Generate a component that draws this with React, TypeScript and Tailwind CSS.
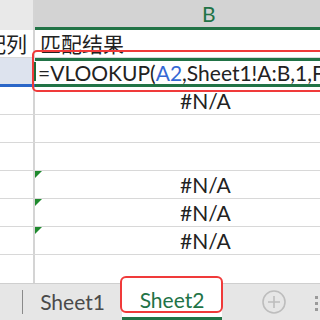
import React from "react";

const font = { fontFamily: 'Lato, "Noto Sans CJK SC", sans-serif' };

function Tri() {
  return <span className="absolute left-0 top-0 w-0 h-0 border-t-[7px] border-r-[7px] border-t-[#1f8a2e] border-r-transparent" />;
}

function Row({ b, tri }: { b?: React.ReactNode; tri?: boolean }) {
  return (
    <div className="flex h-[28px] border-b border-[#d8d8d8]">
      <div className="w-[35px] shrink-0 border-r-2 border-[#d4d4d4]" />
      <div className="relative flex-1 flex items-center pl-[145px] text-[21px] text-[#222]">
        {tri && <Tri />}
        {b}
      </div>
    </div>
  );
}

export default function App() {
  return (
    <div className="w-[320px] h-[320px] overflow-hidden bg-white relative" style={font}>
      {/* column headers */}
      <div className="flex h-[30px]">
        <div className="w-[35px] bg-[#e9e9e9] border-r-2 border-[#d4d4d4]" />
        <div className="flex-1 bg-[#d3d3d3] border-b-[3px] border-[#217346] flex items-center pl-[167px] text-[21px] text-[#217346]">
          B
        </div>
      </div>

      {/* row 1 */}
      <div className="flex h-[28px] border-b border-[#d8d8d8] text-[21px] text-[#222] items-center">
        <div className="w-[35px] shrink-0 h-full border-r-2 border-[#d4d4d4] overflow-hidden flex items-center justify-end pr-[6px] whitespace-nowrap">
          配列
        </div>
        <div className="flex-1 pl-[5px] whitespace-nowrap">匹配结果</div>
      </div>

      {/* row 2 (selected) */}
      <div className="flex h-[29px]">
        <div className="w-[35px] shrink-0 bg-[#dde3ee] border-b-[3px] border-[#2a66c8] relative">
          <span className="absolute right-[-1px] top-[4px] w-[3px] h-[19px] bg-[#1e6b3a]" />
        </div>
        <div className="flex-1 border-y-[3px] border-[#217346] flex items-center pl-[3px] text-[21px] text-[#222] whitespace-nowrap overflow-hidden">
          =VLOOKUP(<span className="text-[#3568d4]">A2</span>,Sheet1!A:B,1,FALSE)
        </div>
      </div>

      <Row b="#N/A" />
      <Row />
      <Row />
      <Row b="#N/A" tri />
      <Row b="#N/A" tri />
      <Row b="#N/A" tri />
      <div className="flex h-[28px]">
        <div className="w-[35px] shrink-0 border-r-2 border-[#d4d4d4]" />
        <div className="flex-1" />
      </div>

      {/* sheet tabs */}
      <div className="flex h-[37px] bg-[#e6e6e6] border-t border-[#cfcfcf] items-stretch">
        <div className="w-[23px] flex items-center justify-end">
          <span className="w-px h-[24px] bg-[#8a8a8a]" />
        </div>
        <div className="w-[99px] flex items-center justify-center text-[21px] text-[#4a4a4a]">Sheet1</div>
        <div className="w-[100px] bg-white flex items-center justify-center text-[21px] text-[#217346] border-b-[3px] border-[#217346] -mt-px">
          Sheet2
        </div>
        <div className="flex-1 flex items-center justify-end pr-[34px]">
          <svg width="24" height="24" viewBox="0 0 24 24" fill="none" stroke="#bdbdbd" strokeWidth="1.6">
            <circle cx="12" cy="12" r="11" />
            <path d="M12 6v12M6 12h12" />
          </svg>
        </div>
      </div>
      <div className="absolute right-[2px] top-[296px] flex flex-col gap-[3px]">
        <span className="w-[3px] h-[3px] bg-[#9a9a9a]" />
        <span className="w-[3px] h-[3px] bg-[#9a9a9a]" />
        <span className="w-[3px] h-[3px] bg-[#9a9a9a]" />
      </div>

      {/* red annotations */}
      <div className="absolute left-[32px] top-[50px] w-[300px] h-[42px] border-2 border-[#f03a3a] rounded-[5px]" />
      <div className="absolute left-[120px] top-[276px] w-[103px] h-[37px] border-2 border-[#f03a3a] rounded-[6px]" />
    </div>
  );
}
